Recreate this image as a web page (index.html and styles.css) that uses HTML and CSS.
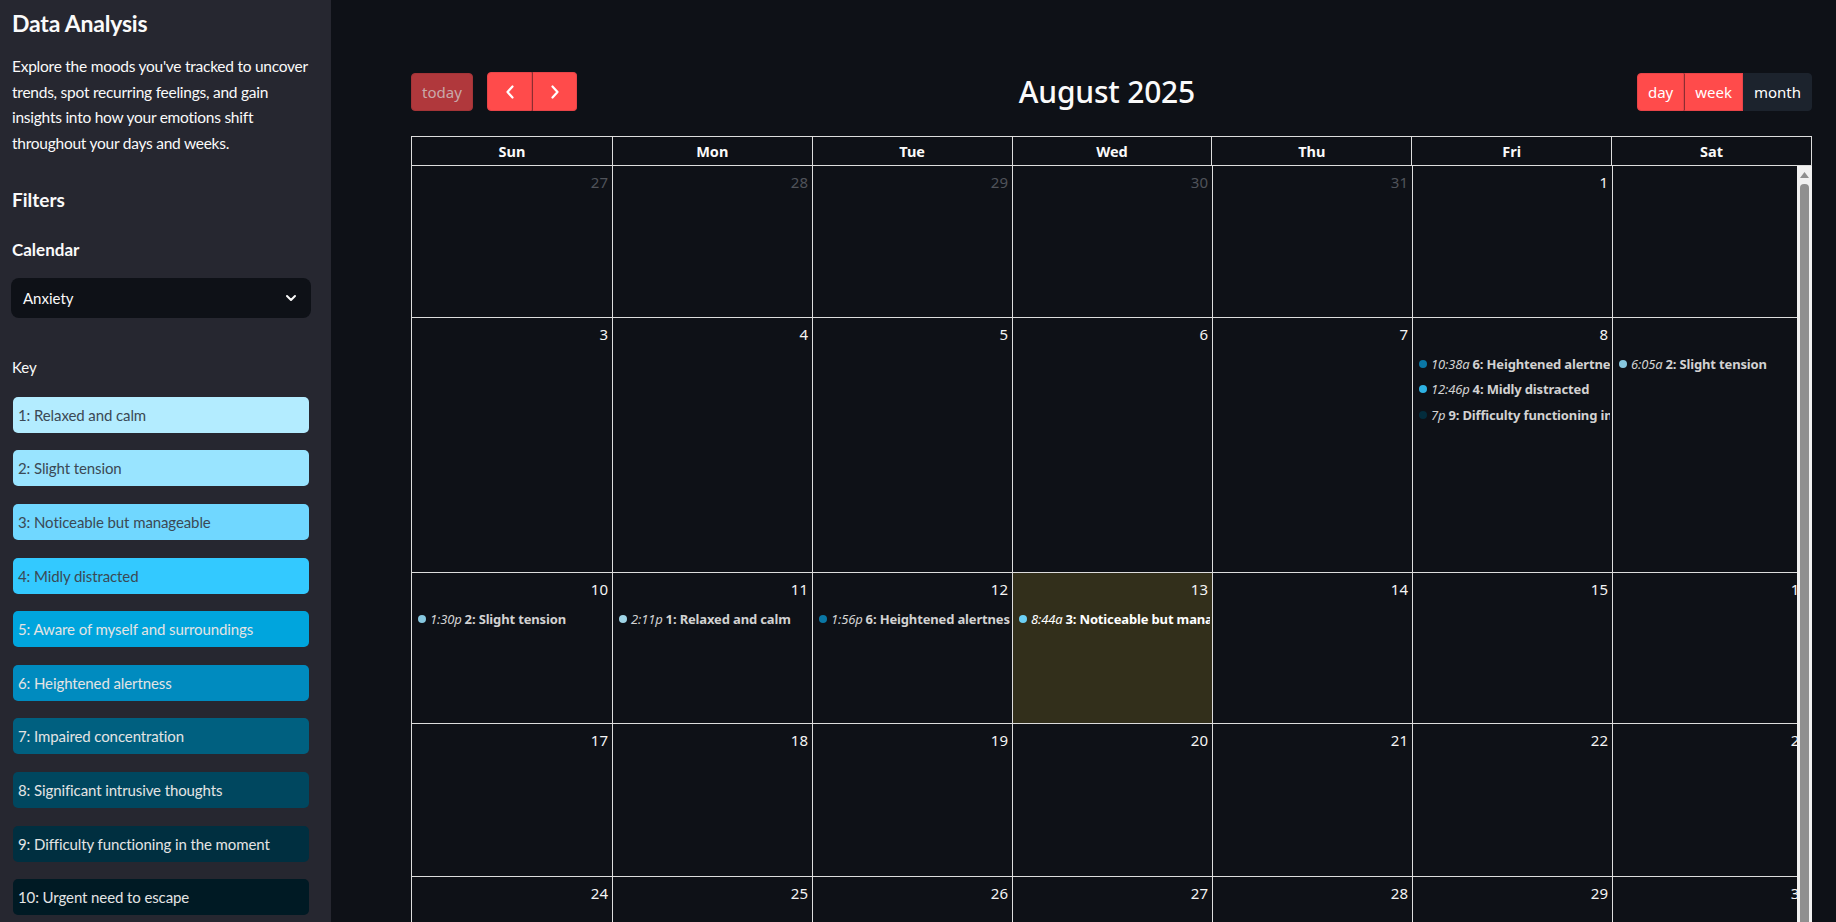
FILE: index.html
```html
<!DOCTYPE html>
<html lang="en">
<head>
<meta charset="utf-8">
<title>Data Analysis</title>
<link rel="stylesheet" href="styles.css">
</head>
<body>
<aside class="sidebar">
  <h2 class="side-title">Data Analysis</h2>
  <p class="side-text">Explore the moods you've tracked to uncover trends, spot recurring feelings, and gain insights into how your emotions shift throughout your days and weeks.</p>
  <h3 class="side-h3">Filters</h3>
  <h4 class="side-h4">Calendar</h4>
  <div class="select">
    <span>Anxiety</span>
    <svg class="select-chev" width="12" height="8" viewBox="0 0 12 8"><path d="M2 2 L6 6 L10 2" fill="none" stroke="#fafafa" stroke-width="2" stroke-linecap="round" stroke-linejoin="round"/></svg>
  </div>
  <div class="key-label">Key</div>
  <ul class="key">
    <li class="k k1">1: Relaxed and calm</li>
    <li class="k k2">2: Slight tension</li>
    <li class="k k3">3: Noticeable but manageable</li>
    <li class="k k4">4: Midly distracted</li>
    <li class="k k5">5: Aware of myself and surroundings</li>
    <li class="k k6">6: Heightened alertness</li>
    <li class="k k7">7: Impaired concentration</li>
    <li class="k k8">8: Significant intrusive thoughts</li>
    <li class="k k9">9: Difficulty functioning in the moment</li>
    <li class="k k10">10: Urgent need to escape</li>
  </ul>
</aside>
<main class="main">
  <div class="toolbar">
    <div class="chunk">
      <button class="btn btn-today">today</button>
      <div class="btn-group">
        <button class="btn btn-nav"><svg width="10" height="14" viewBox="0 0 10 14"><path d="M7.5 1.5 L2.5 7 L7.5 12.5" fill="none" stroke="#fff" stroke-width="2.2" stroke-linecap="round" stroke-linejoin="round"/></svg></button>
        <button class="btn btn-nav"><svg width="10" height="14" viewBox="0 0 10 14"><path d="M2.5 1.5 L7.5 7 L2.5 12.5" fill="none" stroke="#fff" stroke-width="2.2" stroke-linecap="round" stroke-linejoin="round"/></svg></button>
      </div>
    </div>
    <h2 class="cal-title">August 2025</h2>
    <div class="btn-group">
      <button class="btn">day</button>
      <button class="btn">week</button>
      <button class="btn btn-active">month</button>
    </div>
  </div>
  <div class="cal">
    <div class="cal-head">
      <div class="hc">Sun</div><div class="hc">Mon</div><div class="hc">Tue</div><div class="hc">Wed</div><div class="hc">Thu</div><div class="hc">Fri</div><div class="hc">Sat</div>
    </div>
    <div class="cal-body">
      <div class="row r1">
        <div class="cell other"><div class="num">27</div></div>
        <div class="cell other"><div class="num">28</div></div>
        <div class="cell other"><div class="num">29</div></div>
        <div class="cell other"><div class="num">30</div></div>
        <div class="cell other"><div class="num">31</div></div>
        <div class="cell"><div class="num">1</div></div>
        <div class="cell"><div class="num">2</div></div>
      </div>
      <div class="row r2">
        <div class="cell"><div class="num">3</div></div>
        <div class="cell"><div class="num">4</div></div>
        <div class="cell"><div class="num">5</div></div>
        <div class="cell"><div class="num">6</div></div>
        <div class="cell"><div class="num">7</div></div>
        <div class="cell"><div class="num">8</div>
          <div class="ev"><span class="dot d6"></span><span class="t">10:38a</span><b>6: Heightened alertness</b></div>
          <div class="ev"><span class="dot d4"></span><span class="t">12:46p</span><b>4: Midly distracted</b></div>
          <div class="ev"><span class="dot d9"></span><span class="t">7p</span><b>9: Difficulty functioning in the moment</b></div>
        </div>
        <div class="cell"><div class="num">9</div>
          <div class="ev"><span class="dot d2"></span><span class="t">6:05a</span><b>2: Slight tension</b></div>
        </div>
      </div>
      <div class="row r3">
        <div class="cell"><div class="num">10</div>
          <div class="ev"><span class="dot d2"></span><span class="t">1:30p</span><b>2: Slight tension</b></div>
        </div>
        <div class="cell"><div class="num">11</div>
          <div class="ev"><span class="dot d1"></span><span class="t">2:11p</span><b>1: Relaxed and calm</b></div>
        </div>
        <div class="cell"><div class="num">12</div>
          <div class="ev"><span class="dot d6"></span><span class="t">1:56p</span><b>6: Heightened alertness</b></div>
        </div>
        <div class="cell today"><div class="num">13</div>
          <div class="ev"><span class="dot d3"></span><span class="t">8:44a</span><b>3: Noticeable but manageable</b></div>
        </div>
        <div class="cell"><div class="num">14</div></div>
        <div class="cell"><div class="num">15</div></div>
        <div class="cell"><div class="num">16</div></div>
      </div>
      <div class="row r4">
        <div class="cell"><div class="num">17</div></div>
        <div class="cell"><div class="num">18</div></div>
        <div class="cell"><div class="num">19</div></div>
        <div class="cell"><div class="num">20</div></div>
        <div class="cell"><div class="num">21</div></div>
        <div class="cell"><div class="num">22</div></div>
        <div class="cell"><div class="num">23</div></div>
      </div>
      <div class="row r5">
        <div class="cell"><div class="num">24</div></div>
        <div class="cell"><div class="num">25</div></div>
        <div class="cell"><div class="num">26</div></div>
        <div class="cell"><div class="num">27</div></div>
        <div class="cell"><div class="num">28</div></div>
        <div class="cell"><div class="num">29</div></div>
        <div class="cell"><div class="num">30</div></div>
      </div>
      <div class="row r6">
        <div class="cell"><div class="num">31</div></div>
        <div class="cell other"><div class="num">1</div></div>
        <div class="cell other"><div class="num">2</div></div>
        <div class="cell other"><div class="num">3</div></div>
        <div class="cell other"><div class="num">4</div></div>
        <div class="cell other"><div class="num">5</div></div>
        <div class="cell other"><div class="num">6</div></div>
      </div>
      <div class="scrollbar">
        <svg class="sb-arrow" width="9" height="6" viewBox="0 0 9 6"><path d="M0 6 L4.5 0 L9 6 Z" fill="#8f8f8f"/></svg>
        <div class="sb-thumb"></div>
      </div>
    </div>
  </div>
</main>
</body>
</html>
```
FILE: styles.css
```css
* { box-sizing: border-box; }
html, body { margin: 0; padding: 0; }
body {
  width: 1836px;
  height: 922px;
  overflow: hidden;
  display: flex;
  background: #0e1117;
  color: #fafafa;
  font-family: "Lato", "Liberation Sans", sans-serif;
}

/* ---------- sidebar ---------- */
.sidebar {
  width: 331px;
  flex: none;
  height: 922px;
  background: #262730;
  padding: 0 20px 0 12px;
}
.side-title {
  margin: 8px 0 0;
  font-size: 23px;
  line-height: 30px;
  font-weight: 700;
  letter-spacing: -0.2px;
}
.side-text {
  margin: 16px 0 0;
  font-size: 15.5px;
  line-height: 25.6px;
  letter-spacing: -0.25px;
}
.side-h3 {
  margin: 29.5px 0 0;
  font-size: 19px;
  line-height: 28px;
  font-weight: 700;
}
.side-h4 {
  margin: 24.5px 0 0;
  font-size: 17px;
  line-height: 24px;
  font-weight: 700;
}
.select {
  margin: 16px 0 0 -1px;
  width: 300px;
  height: 40px;
  border-radius: 8px;
  background: #0e1117;
  display: flex;
  align-items: center;
  justify-content: space-between;
  padding: 0 14px 0 12px;
  font-size: 15px;
}
.select-chev { display: block; }
.key-label {
  margin: 38px 0 0;
  font-size: 15px;
  line-height: 22px;
}
.key {
  list-style: none;
  margin: 18.5px 0 0 1px;
  padding: 0;
  display: flex;
  flex-direction: column;
  gap: 17.6px;
}
.k {
  width: 296px;
  height: 36px;
  border-radius: 5px;
  padding: 0 5px;
  display: flex;
  align-items: center;
  font-size: 15px;
  letter-spacing: -0.1px;
  color: #e4e4e4;
}
.k1 { background: #b3ecff; color: #3b4955; }
.k2 { background: #99e4ff; color: #3b4955; }
.k3 { background: #70d7ff; color: #3b4955; }
.k4 { background: #33c9ff; color: #3b4955; }
.k5 { background: #00a5dd; }
.k6 { background: #008bbf; }
.k7 { background: #006080; }
.k8 { background: #00475f; }
.k9 { background: #002f40; }
.k10 { background: #001a24; }

/* ---------- main ---------- */
.main {
  flex: 1;
  padding: 72px 24px 0 80px;
  font-family: "Noto Sans", "Liberation Sans", sans-serif;
  min-width: 0;
}
.toolbar {
  display: flex;
  justify-content: space-between;
  align-items: center;
  height: 39px;
  margin-bottom: 25px;
}
.chunk { display: flex; align-items: center; gap: 14px; }
.btn {
  font-family: inherit;
  font-size: 15px;
  line-height: 22px;
  height: 38px;
  padding: 0 10px;
  border: 1px solid #e84448;
  background: #ff4b4b;
  color: #fff;
  border-radius: 4px;
  display: flex;
  align-items: center;
  justify-content: center;
}
.btn-today {
  width: 62px;
  background: #b0383c;
  border-color: #a33437;
  color: #c9a9aa;
}
.btn-group { display: flex; }
.btn-group .btn { border-radius: 0; }
.btn-group .btn:first-child { border-radius: 4px 0 0 4px; }
.btn-group .btn:last-child { border-radius: 0 4px 4px 0; }
.btn-group .btn + .btn { border-left: 1px solid #8c2d30; }
.btn-nav { width: 45px; height: 39px; }
.btn-nav svg { display: block; }
.btn-active {
  background: #1c232d;
  border-color: #1c232d;
}
.btn-group .btn.btn-active { border-left-color: #1c232d; }
.cal-title {
  margin: 0;
  font-size: 30px;
  font-weight: 500;
  line-height: 36px;
  letter-spacing: -0.2px;
}

/* ---------- calendar ---------- */
.cal {
  width: 1401px;
  border: 1px solid #dddddd;
  border-bottom: none;
}
.cal-head {
  display: grid;
  grid-template-columns: repeat(7, 1fr);
  border-bottom: 1px solid #dddddd;
}
.hc {
  height: 28px;
  display: flex;
  align-items: center;
  justify-content: center;
  font-weight: 700;
  font-size: 14.5px;
}
.hc + .hc { border-left: 1px solid #dddddd; }
.cal-body {
  position: relative;
  height: 757px;
  overflow: hidden;
  margin-right: -1px;
}
.row {
  display: grid;
  grid-template-columns: 201px repeat(6, 200px);
  border-bottom: 1px solid #dddddd;
}
.r1 { height: 152px; }
.r2 { height: 255px; }
.r3 { height: 151px; }
.r4 { height: 153px; }
.r5 { height: 153px; }
.r6 { height: 153px; }
.cell {
  border-right: 1px solid #dddddd;
  min-width: 0;
  overflow: hidden;
}
.cell.today { background: #322f1b; }
.num {
  text-align: right;
  padding: 5px 4px 0 0;
  height: 33px;
  font-size: 15px;
  line-height: 22px;
  color: #f4f4f4;
}
.other .num { color: #50535a; }
.ev {
  display: flex;
  align-items: center;
  height: 25.5px;
  margin: 0 2px;
  white-space: nowrap;
  overflow: hidden;
  font-size: 13px;
  letter-spacing: -0.15px;
  color: #d2d2d2;
}
.today .ev { color: #ffffff; }
.dot {
  flex: none;
  width: 8px;
  height: 8px;
  border-radius: 50%;
  margin: 0 4px;
}
.d1 { background: #9fd4e6; }
.d2 { background: #86c7df; }
.d3 { background: #6cd0f5; }
.d4 { background: #2eb2e3; }
.d6 { background: #0a77a5; }
.d9 { background: #032c3c; }
.t { font-style: italic; margin-right: 3px; flex: none; }
.ev b { font-weight: 700; flex: none; }

.scrollbar {
  position: absolute;
  top: 0;
  right: 0;
  width: 15px;
  height: 100%;
  background: #f1f1f1;
  padding-top: 6px;
  display: flex;
  flex-direction: column;
  align-items: center;
}
.sb-arrow { display: block; }
.sb-thumb {
  margin-top: 6px;
  width: 9px;
  flex: 1;
  background: #8f8f8f;
  border-radius: 4px 4px 0 0;
}
```
